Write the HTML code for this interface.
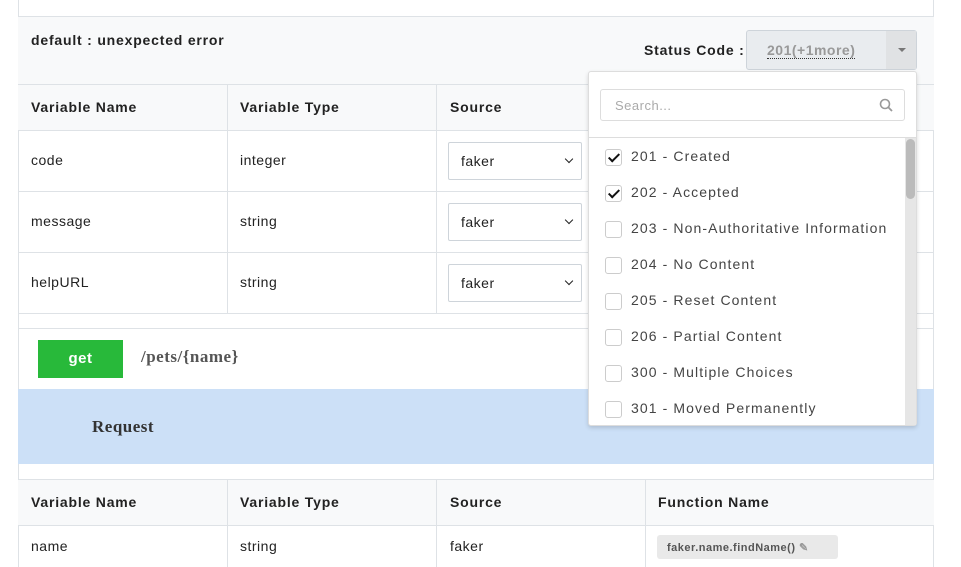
<!DOCTYPE html>
<html><head><style>
*{box-sizing:border-box;margin:0;padding:0}
body{width:961px;height:567px;background:#fff;font-family:"Liberation Sans",sans-serif;color:#222;position:relative;overflow:hidden;font-size:14px;letter-spacing:.5px}
.a{position:absolute}
.th{font-weight:bold;font-size:14px;color:#222;letter-spacing:.8px}
.sel{position:absolute;width:134px;height:38px;border:1px solid #ced4da;border-radius:2px;background:#fff;font-size:14px;padding:10px 12px;color:#222}
.sel:after{content:"";position:absolute;right:9px;top:13px;width:5px;height:5px;border-right:1.8px solid #222;border-bottom:1.8px solid #222;transform:rotate(45deg)}
.item{position:absolute;left:16px;font-size:14px;color:#444;letter-spacing:1.1px}
.cb{position:absolute;left:0;top:1px;width:17px;height:17px;border:1px solid #ccc;border-radius:3px;background:#fff}
.cb.on:after{content:"";position:absolute;left:5px;top:1px;width:4px;height:9px;border-right:2.5px solid #111;border-bottom:2.5px solid #111;transform:rotate(45deg)}
.item span{position:absolute;left:26px;top:0;white-space:nowrap}
</style></head><body>
<div class="a" style="left:18px;top:0;width:916px;height:567px;border-left:1px solid #dee2e6;border-right:1px solid #dee2e6"></div>
<div class="a" style="left:18px;top:16px;width:916px;height:69px;background:#f8f9fa;border-top:1px solid #dee2e6;border-bottom:1px solid #dee2e6"></div>
<div class="a th" style="left:31px;top:32px">default : unexpected error</div>
<div class="a th" style="left:644px;top:42px">Status Code :</div>
<div class="a" style="left:746px;top:30px;width:171px;height:40px;background:#e9ecef;border:1px solid #ced4da;border-radius:3px"></div>
<div class="a" style="left:886px;top:31px;width:30px;height:38px;background:#e0e2e4"></div>
<div class="a" style="left:898px;top:48px;border:4px solid transparent;border-top:4px solid #777"></div>
<div class="a" style="left:767px;top:42px;color:#999;font-weight:bold;border-bottom:1px dotted #333;line-height:16px">201(+1more)</div>
<!-- table 1 -->
<div class="a" style="left:18px;top:84px;width:916px;height:47px;background:#f8f9fa;border-top:1px solid #dee2e6;border-bottom:1px solid #dee2e6"></div>
<div class="a th" style="left:31px;top:99px">Variable Name</div>
<div class="a th" style="left:240px;top:99px">Variable Type</div>
<div class="a th" style="left:450px;top:99px">Source</div>
<div class="a" style="left:18px;top:191px;width:916px;border-top:1px solid #dee2e6"></div>
<div class="a" style="left:18px;top:252px;width:916px;border-top:1px solid #dee2e6"></div>
<div class="a" style="left:18px;top:313px;width:916px;border-top:1px solid #dee2e6"></div>
<div class="a" style="left:227px;top:84px;height:229px;border-left:1px solid #dee2e6"></div>
<div class="a" style="left:436px;top:84px;height:229px;border-left:1px solid #dee2e6"></div>
<div class="a" style="left:31px;top:152px">code</div><div class="a" style="left:240px;top:152px">integer</div>
<div class="a" style="left:31px;top:213px">message</div><div class="a" style="left:240px;top:213px">string</div>
<div class="a" style="left:31px;top:274px">helpURL</div><div class="a" style="left:240px;top:274px">string</div>
<div class="sel" style="left:448px;top:142px">faker</div>
<div class="sel" style="left:448px;top:203px">faker</div>
<div class="sel" style="left:448px;top:264px">faker</div>
<div class="a" style="left:18px;top:328px;width:916px;border-top:1px solid #dee2e6"></div>
<div class="a" style="left:38px;top:340px;width:85px;height:38px;background:#28b93a;color:#fff;font-weight:bold;text-align:center;line-height:38px;font-size:15px">get</div>
<div class="a" style="left:141px;top:347px;font-family:'Liberation Serif',serif;font-weight:bold;font-size:17px;color:#555">/pets/{name}</div>
<div class="a" style="left:18px;top:389px;width:916px;height:75px;background:#cce0f7"></div>
<div class="a" style="left:92px;top:417px;font-family:'Liberation Serif',serif;font-weight:bold;font-size:17px;color:#333">Request</div>
<!-- table 2 -->
<div class="a" style="left:18px;top:479px;width:916px;height:47px;background:#f8f9fa;border-top:1px solid #dee2e6;border-bottom:1px solid #dee2e6"></div>
<div class="a th" style="left:31px;top:494px">Variable Name</div>
<div class="a th" style="left:240px;top:494px">Variable Type</div>
<div class="a th" style="left:450px;top:494px">Source</div>
<div class="a th" style="left:658px;top:494px">Function Name</div>
<div class="a" style="left:227px;top:479px;height:88px;border-left:1px solid #dee2e6"></div>
<div class="a" style="left:436px;top:479px;height:88px;border-left:1px solid #dee2e6"></div>
<div class="a" style="left:645px;top:479px;height:88px;border-left:1px solid #dee2e6"></div>
<div class="a" style="left:31px;top:538px">name</div><div class="a" style="left:240px;top:538px">string</div><div class="a" style="left:450px;top:538px">faker</div>
<div class="a" style="left:657px;top:535px;width:181px;height:24px;background:#e9e9e9;border-radius:3px;font-size:11px;font-weight:bold;color:#555;padding:6px 10px;letter-spacing:.5px">faker.name.findName() <span style="color:#999">&#9998;</span></div>
<!-- dropdown -->
<div class="a" style="left:588px;top:71px;width:329px;height:355px;background:#fff;border:1px solid #ddd;border-radius:3px;box-shadow:0 2px 4px rgba(0,0,0,.15)">
 <div class="a" style="left:11px;top:17px;width:305px;height:32px;border:1px solid #ddd;border-radius:3px;color:#aaa;font-size:13px;padding:8px 14px">Search...</div>
 <svg class="a" style="left:290px;top:26px" width="14" height="14" viewBox="0 0 14 14"><circle cx="6" cy="6" r="4.5" fill="none" stroke="#999" stroke-width="1.6"/><path d="M9.3 9.3L13 13" stroke="#999" stroke-width="1.8"/></svg>
 <div class="a" style="left:0;top:65px;width:327px;border-top:1px solid #ddd"></div>
 <div class="a" style="left:316px;top:66px;width:11px;height:287px;background:#e6e6e6"></div>
 <div class="a" style="left:317px;top:67px;width:9px;height:60px;background:#bbb;border-radius:5px"></div>
 <div class="item" style="top:76px"><div class="cb on"></div><span>201 - Created</span></div>
 <div class="item" style="top:112px"><div class="cb on"></div><span>202 - Accepted</span></div>
 <div class="item" style="top:148px"><div class="cb"></div><span>203 - Non-Authoritative Information</span></div>
 <div class="item" style="top:184px"><div class="cb"></div><span>204 - No Content</span></div>
 <div class="item" style="top:220px"><div class="cb"></div><span>205 - Reset Content</span></div>
 <div class="item" style="top:256px"><div class="cb"></div><span>206 - Partial Content</span></div>
 <div class="item" style="top:292px"><div class="cb"></div><span>300 - Multiple Choices</span></div>
 <div class="item" style="top:328px"><div class="cb"></div><span>301 - Moved Permanently</span></div>
</div>
</body></html>
